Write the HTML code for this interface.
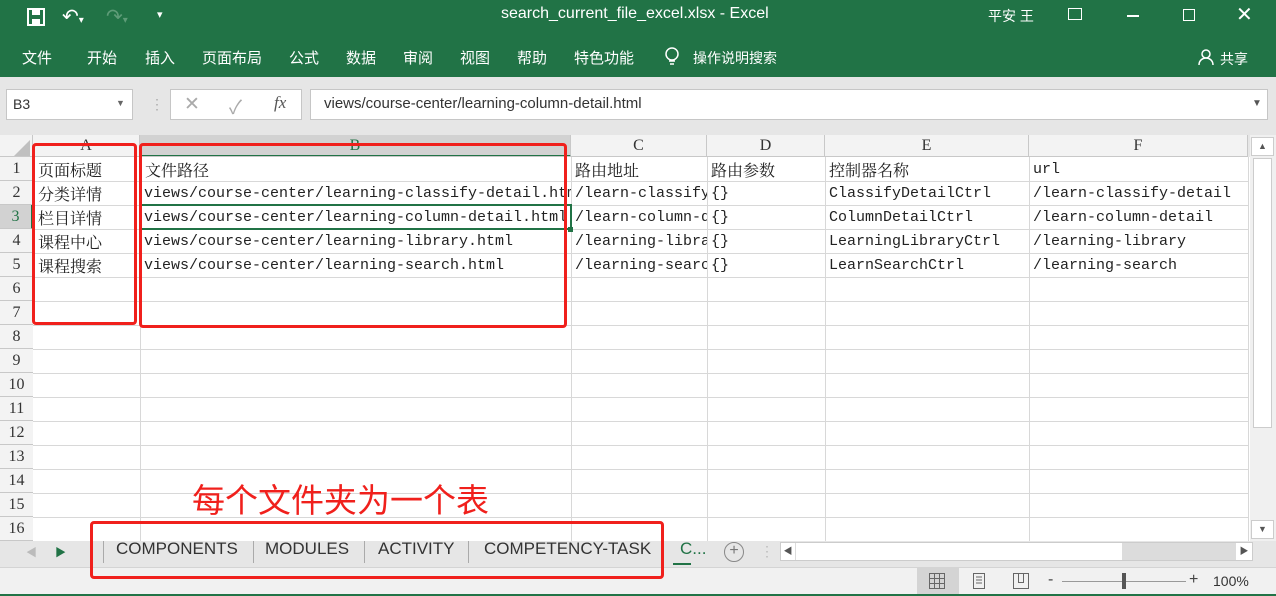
<!DOCTYPE html>
<html><head><meta charset="utf-8"><style>
*{margin:0;padding:0;box-sizing:border-box}
body{width:1276px;height:596px;overflow:hidden;background:#e6e6e6;font-family:"Liberation Sans","Noto Sans CJK SC",sans-serif;position:relative}
.a{position:absolute}
.w{color:#fff}
.cell{position:absolute;font-family:"Liberation Mono","Noto Serif CJK SC",monospace;font-size:15px;color:#222;white-space:nowrap;overflow:hidden;line-height:24px;height:24px}
.cn{font-family:"Noto Serif CJK SC","Liberation Serif",serif;font-size:16px}
.hl{position:absolute;height:1px;background:#d8d8d8;left:33px;width:1215px}
.vl{position:absolute;width:1px;background:#d8d8d8;top:157px;height:384px}
.rh{position:absolute;left:0;width:33px;height:24px;line-height:24px;text-align:center;font-family:"Liberation Serif",serif;font-size:16px;color:#333;border-bottom:1px solid #c8c8c8;background:#f3f3f3}
.ch{position:absolute;top:135px;height:22px;line-height:22px;text-align:center;font-family:"Liberation Serif",serif;font-size:16px;color:#333;border-right:1px solid #c8c8c8;background:#f3f3f3}
.red{position:absolute;border:3px solid #f0201c;border-radius:4px}
.tab{position:absolute;top:539px;font-size:17px;color:#333}
</style></head><body>
<div class="a" style="left:0;top:0;width:1276px;height:77px;background:#217346"></div>
<svg class="a" style="left:26px;top:7px" width="20" height="20" viewBox="0 0 20 20"><rect x="2" y="2" width="16" height="16" fill="none" stroke="#fff" stroke-width="2"/><rect x="6" y="3" width="8" height="5" fill="#fff"/><rect x="6" y="12" width="8" height="5" fill="#fff"/></svg>
<div class="a w" style="left:62px;top:4px;font-size:20px">↶<span style="font-size:10px">▾</span></div>
<div class="a" style="left:106px;top:4px;font-size:20px;color:#5e9c78">↷<span style="font-size:10px">▾</span></div>
<div class="a w" style="left:157px;top:8px;font-size:11px">▾</div>
<div class="a w" style="left:501px;top:5px;font-size:16px">search_current_file_excel.xlsx  -  Excel</div>
<div class="a w" style="left:988px;top:6px;font-size:14px">平安 王</div>
<div class="a" style="left:1068px;top:8px;width:14px;height:12px;border:1.5px solid #fff"></div>
<div class="a" style="left:1127px;top:15px;width:12px;height:1.5px;background:#fff"></div>
<div class="a" style="left:1183px;top:9px;width:12px;height:12px;border:1.5px solid #fff"></div>
<div class="a w" style="left:1236px;top:2px;font-size:20px">✕</div>
<div class="a w" style="top:47px;font-size:15px;left:22px">文件</div>
<div class="a w" style="top:47px;font-size:15px;left:87px">开始</div>
<div class="a w" style="top:47px;font-size:15px;left:145px">插入</div>
<div class="a w" style="top:47px;font-size:15px;left:202px">页面布局</div>
<div class="a w" style="top:47px;font-size:15px;left:289px">公式</div>
<div class="a w" style="top:47px;font-size:15px;left:346px">数据</div>
<div class="a w" style="top:47px;font-size:15px;left:403px">审阅</div>
<div class="a w" style="top:47px;font-size:15px;left:460px">视图</div>
<div class="a w" style="top:47px;font-size:15px;left:517px">帮助</div>
<div class="a w" style="top:47px;font-size:15px;left:574px">特色功能</div>
<svg class="a" style="left:664px;top:47px" width="16" height="20" viewBox="0 0 16 20"><circle cx="8" cy="7" r="6" fill="none" stroke="#fff" stroke-width="1.5"/><path d="M5 14h6M6 17h4" stroke="#fff" stroke-width="1.5"/></svg>
<div class="a w" style="top:48px;font-size:14px;left:693px">操作说明搜索</div>
<svg class="a" style="left:1198px;top:48px" width="18" height="18" viewBox="0 0 18 18"><circle cx="8" cy="6" r="4" fill="none" stroke="#fff" stroke-width="1.5"/><path d="M1 17c0-5 4-7 7-7s7 2 7 7" fill="none" stroke="#fff" stroke-width="1.5"/></svg>
<div class="a w" style="top:49px;font-size:14px;left:1220px">共享</div>
<div class="a" style="left:6px;top:89px;width:127px;height:31px;background:#fff;border:1px solid #c6c6c6"></div>
<div class="a" style="left:13px;top:96px;font-size:14px;color:#333">B3</div>
<div class="a" style="left:116px;top:98px;font-size:9px;color:#666">▼</div>
<div class="a" style="left:150px;top:96px;font-size:14px;color:#aaa">⋮</div>
<div class="a" style="left:170px;top:89px;width:132px;height:31px;background:#fff;border:1px solid #c6c6c6"></div>
<div class="a" style="left:184px;top:93px;font-size:19px;color:#aaa">✕</div>
<div class="a" style="left:229px;top:93px;font-size:19px;color:#aaa">✓</div>
<div class="a" style="left:274px;top:93px;font-size:17px;color:#555;font-style:italic;font-family:'Liberation Serif',serif">fx</div>
<div class="a" style="left:310px;top:89px;width:958px;height:31px;background:#fff;border:1px solid #c6c6c6"></div>
<div class="a" style="left:324px;top:95px;font-size:15px;color:#333">views/course-center/learning-column-detail.html</div>
<div class="a" style="left:1252px;top:98px;font-size:10px;color:#555">▼</div>
<div class="a" style="left:33px;top:157px;width:1217px;height:384px;background:#fff"></div>
<div class="a" style="left:0;top:135px;width:33px;height:22px;background:#f3f3f3;border-right:1px solid #c8c8c8;border-bottom:1px solid #c8c8c8"></div>
<svg class="a" style="left:14px;top:140px" width="16" height="16"><path d="M16 0V16H0Z" fill="#c0c0c0"/></svg>
<div class="ch" style="left:33px;width:107px">A</div>
<div class="ch" style="left:140px;width:431px;background:#d2d2d2;border-bottom:2px solid #217346;color:#217346">B</div>
<div class="ch" style="left:571px;width:136px">C</div>
<div class="ch" style="left:707px;width:118px">D</div>
<div class="ch" style="left:825px;width:204px">E</div>
<div class="ch" style="left:1029px;width:219px">F</div>
<div class="a" style="left:0;top:156px;width:1248px;height:1px;background:#c8c8c8"></div>
<div class="vl" style="left:140px"></div><div class="vl" style="left:571px"></div><div class="vl" style="left:707px"></div><div class="vl" style="left:825px"></div><div class="vl" style="left:1029px"></div><div class="vl" style="left:1248px"></div>
<div class="hl" style="top:181px"></div><div class="hl" style="top:205px"></div><div class="hl" style="top:229px"></div><div class="hl" style="top:253px"></div><div class="hl" style="top:277px"></div><div class="hl" style="top:301px"></div><div class="hl" style="top:325px"></div><div class="hl" style="top:349px"></div><div class="hl" style="top:373px"></div><div class="hl" style="top:397px"></div><div class="hl" style="top:421px"></div><div class="hl" style="top:445px"></div><div class="hl" style="top:469px"></div><div class="hl" style="top:493px"></div><div class="hl" style="top:517px"></div>
<div class="a" style="left:0;top:157px;width:33px;height:384px;background:#f3f3f3;border-right:1px solid #c8c8c8"></div>
<div class="rh" style="top:157px">1</div><div class="rh" style="top:181px">2</div><div class="rh" style="top:205px;background:#d2d2d2;color:#217346;border-right:2px solid #217346">3</div><div class="rh" style="top:229px">4</div><div class="rh" style="top:253px">5</div><div class="rh" style="top:277px">6</div><div class="rh" style="top:301px">7</div><div class="rh" style="top:325px">8</div><div class="rh" style="top:349px">9</div><div class="rh" style="top:373px">10</div><div class="rh" style="top:397px">11</div><div class="rh" style="top:421px">12</div><div class="rh" style="top:445px">13</div><div class="rh" style="top:469px">14</div><div class="rh" style="top:493px">15</div><div class="rh" style="top:517px">16</div>
<div class="cell cn" style="left:38px;top:158px">页面标题</div>
<div class="cell cn" style="left:38px;top:182px">分类详情</div>
<div class="cell cn" style="left:38px;top:206px">栏目详情</div>
<div class="cell cn" style="left:38px;top:230px">课程中心</div>
<div class="cell cn" style="left:38px;top:254px">课程搜索</div>
<div class="cell cn" style="left:145px;top:158px">文件路径</div>
<div class="cell" style="left:144px;top:182px;width:427px">views/course-center/learning-classify-detail.html</div>
<div class="cell" style="left:144px;top:206px;width:427px">views/course-center/learning-column-detail.html</div>
<div class="cell" style="left:144px;top:230px">views/course-center/learning-library.html</div>
<div class="cell" style="left:144px;top:254px">views/course-center/learning-search.html</div>
<div class="cell cn" style="left:575px;top:158px">路由地址</div>
<div class="cell" style="left:575px;top:182px;width:132px">/learn-classify-detail</div>
<div class="cell" style="left:575px;top:206px;width:132px">/learn-column-detail</div>
<div class="cell" style="left:575px;top:230px;width:132px">/learning-library</div>
<div class="cell" style="left:575px;top:254px;width:132px">/learning-search</div>
<div class="cell cn" style="left:711px;top:158px">路由参数</div>
<div class="cell" style="left:711px;top:182px">{}</div><div class="cell" style="left:711px;top:206px">{}</div><div class="cell" style="left:711px;top:230px">{}</div><div class="cell" style="left:711px;top:254px">{}</div>
<div class="cell cn" style="left:829px;top:158px">控制器名称</div>
<div class="cell" style="left:829px;top:182px">ClassifyDetailCtrl</div>
<div class="cell" style="left:829px;top:206px">ColumnDetailCtrl</div>
<div class="cell" style="left:829px;top:230px">LearningLibraryCtrl</div>
<div class="cell" style="left:829px;top:254px">LearnSearchCtrl</div>
<div class="cell" style="left:1033px;top:158px">url</div>
<div class="cell" style="left:1033px;top:182px">/learn-classify-detail</div>
<div class="cell" style="left:1033px;top:206px">/learn-column-detail</div>
<div class="cell" style="left:1033px;top:230px">/learning-library</div>
<div class="cell" style="left:1033px;top:254px">/learning-search</div>
<div class="a" style="left:140px;top:204px;width:432px;height:26px;border:2px solid #217346"></div>
<div class="a" style="left:568px;top:227px;width:5px;height:5px;background:#217346"></div>
<div class="a" style="left:1250px;top:135px;width:26px;height:406px;background:#f0f0f0"></div>
<div class="a" style="left:1251px;top:137px;width:23px;height:19px;background:#fff;border:1px solid #ccc;font-size:9px;color:#555;text-align:center;line-height:17px">▲</div>
<div class="a" style="left:1253px;top:158px;width:19px;height:270px;background:#fff;border:1px solid #ccc"></div>
<div class="a" style="left:1251px;top:520px;width:23px;height:19px;background:#fff;border:1px solid #ccc;font-size:9px;color:#555;text-align:center;line-height:17px">▼</div>
<div class="a" style="left:192px;top:476px;font-size:33px;color:#f0201c;font-family:'Noto Sans CJK SC',sans-serif;line-height:44px">每个文件夹为一个表</div>
<div class="a" style="left:0;top:541px;width:1276px;height:26px;background:#e6e6e6"></div>
<div class="a" style="left:26px;top:544px;font-size:11px;color:#bbb">◀</div>
<div class="a" style="left:55px;top:544px;font-size:11px;color:#217346">▶</div>
<div class="a" style="left:103px;top:541px;width:1px;height:22px;background:#aaa"></div>
<div class="tab" style="left:116px">COMPONENTS</div>
<div class="a" style="left:253px;top:541px;width:1px;height:22px;background:#aaa"></div>
<div class="tab" style="left:265px">MODULES</div>
<div class="a" style="left:364px;top:541px;width:1px;height:22px;background:#aaa"></div>
<div class="tab" style="left:378px">ACTIVITY</div>
<div class="a" style="left:468px;top:541px;width:1px;height:22px;background:#aaa"></div>
<div class="tab" style="left:484px">COMPETENCY-TASK</div>
<div class="tab" style="left:680px;color:#217346">C...</div>
<div class="a" style="left:673px;top:563px;width:18px;height:2px;background:#217346"></div>
<div class="a" style="left:724px;top:542px;width:20px;height:20px;border:1.5px solid #888;border-radius:50%;text-align:center;line-height:16px;color:#777;font-size:16px">+</div>
<div class="a" style="left:760px;top:543px;font-size:14px;color:#bbb">⋮</div>
<div class="a" style="left:780px;top:542px;width:473px;height:19px;background:#dcdcdc;border:1px solid #ccc"></div>
<div class="a" style="left:781px;top:543px;width:14px;height:17px;background:#fff;font-size:9px;color:#555;text-align:center;line-height:17px">◀</div>
<div class="a" style="left:796px;top:543px;width:326px;height:17px;background:#fff"></div>
<div class="a" style="left:1236px;top:543px;width:16px;height:17px;background:#fff;font-size:9px;color:#555;text-align:center;line-height:17px">▶</div>
<div class="a" style="left:0;top:567px;width:1276px;height:29px;background:#f1f1f1;border-top:1px solid #d4d4d4"></div>
<div class="a" style="left:0;top:594px;width:1276px;height:2px;background:#217346"></div>
<div class="a" style="left:917px;top:568px;width:42px;height:26px;background:#d4d4d4"></div>
<svg class="a" style="left:929px;top:573px" width="16" height="16"><path d="M.5 .5h15v15H.5zM.5 5.5h15M.5 10.5h15M5.5 .5v15M10.5 .5v15" fill="none" stroke="#666"/></svg>
<svg class="a" style="left:971px;top:573px" width="16" height="16"><path d="M2.5 .5h11v15h-11zM5 4h6M5 7h6M5 10h6" fill="none" stroke="#666"/></svg>
<svg class="a" style="left:1013px;top:573px" width="16" height="16"><path d="M.5 .5h15v15H.5zM5.5 .5v9h5v-9" fill="none" stroke="#666"/></svg>
<div class="a" style="left:1048px;top:571px;font-size:16px;color:#444">-</div>
<div class="a" style="left:1062px;top:581px;width:124px;height:1px;background:#999"></div>
<div class="a" style="left:1122px;top:573px;width:4px;height:16px;background:#555"></div>
<div class="a" style="left:1189px;top:571px;font-size:16px;color:#444">+</div>
<div class="a" style="left:1213px;top:573px;font-size:14px;color:#333">100%</div>
<div class="red" style="left:32px;top:143px;width:105px;height:182px"></div>
<div class="red" style="left:139px;top:143px;width:428px;height:185px"></div>
<div class="red" style="left:90px;top:521px;width:574px;height:58px"></div>
</body></html>
